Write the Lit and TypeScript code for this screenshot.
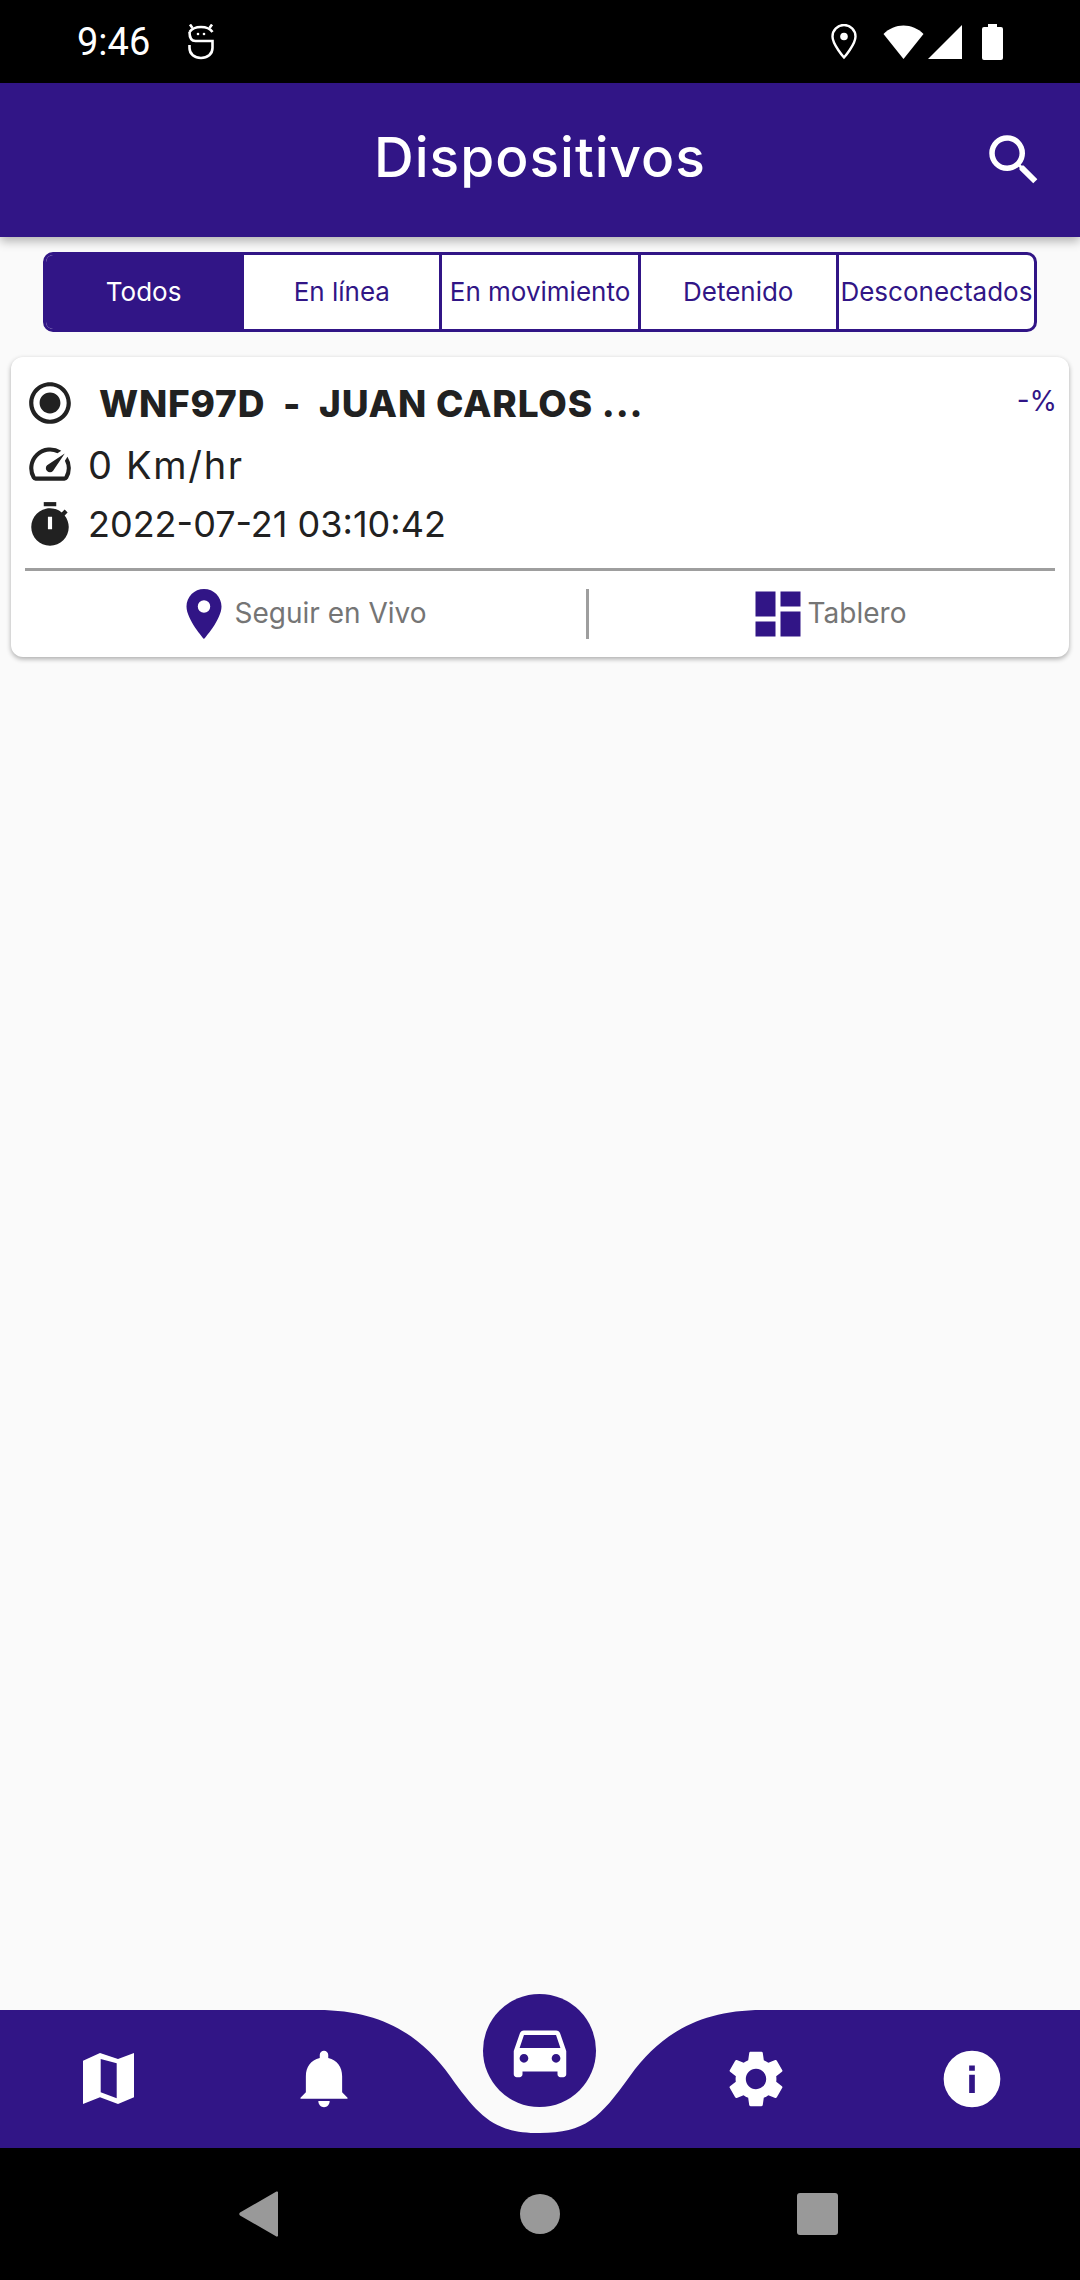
import { LitElement, html, css, svg } from "lit";
import { customElement } from "lit/decorators.js";

const tabs = ["Todos", "En línea", "En movimiento", "Detenido", "Desconectados"];

const icon = (size: number, path: unknown, cls = "") =>
  html`<svg class=${cls} width=${size} height=${size} viewBox="0 0 24 24" fill="currentColor">${path}</svg>`;

const P = {
  search: svg`<path d="M15.5 14h-.79l-.28-.27A6.47 6.47 0 0 0 16 9.5 6.5 6.5 0 1 0 9.5 16c1.61 0 3.09-.59 4.23-1.57l.27.28v.79l5 4.99L20.49 19l-4.99-5zm-6 0C7.01 14 5 11.99 5 9.5S7.01 5 9.5 5 14 7.01 14 9.5 11.99 14 9.5 14z"/>`,
  radio: svg`<path d="M12 7c-2.76 0-5 2.24-5 5s2.24 5 5 5 5-2.24 5-5-2.24-5-5-5zm0-5C6.48 2 2 6.48 2 12s4.48 10 10 10 10-4.48 10-10S17.52 2 12 2zm0 18c-4.42 0-8-3.58-8-8s3.58-8 8-8 8 3.58 8 8-3.58 8-8 8z"/>`,
  speed: svg`<path d="M20.38 8.57l-1.23 1.85a8 8 0 0 1-.22 7.58H5.07A8 8 0 0 1 15.58 6.85l1.85-1.23A10 10 0 0 0 3.35 19a2 2 0 0 0 1.72 1h13.85a2 2 0 0 0 1.74-1 10 10 0 0 0-.27-10.44z"/><path d="M10.59 15.41a2 2 0 0 0 2.83 0l5.66-8.49-8.49 5.66a2 2 0 0 0 0 2.83z"/>`,
  timer: svg`<path d="M15 1H9v2h6V1z"/><path fill-rule="evenodd" d="M19.03 7.39l1.42-1.42c-.43-.51-.9-.99-1.41-1.41l-1.42 1.42A8.962 8.962 0 0 0 12 4c-4.97 0-9 4.03-9 9s4.02 9 9 9 9-4.03 9-9c0-2.12-.74-4.07-1.97-5.61zM13 14h-2V8h2v6z"/>`,
  pin: svg`<path d="M12 2C8.13 2 5 5.13 5 9c0 5.25 7 13 7 13s7-7.75 7-13c0-3.87-3.13-7-7-7zm0 9.5a2.5 2.5 0 0 1 0-5 2.5 2.5 0 0 1 0 5z"/>`,
  dash: svg`<path d="M3 13h8V3H3v10zm0 8h8v-6H3v6zm10 0h8V11h-8v10zm0-18v6h8V3h-8z"/>`,
  car: svg`<path d="M18.92 6.01C18.72 5.42 18.16 5 17.5 5h-11c-.66 0-1.21.42-1.42 1.01L3 12v8c0 .55.45 1 1 1h1c.55 0 1-.45 1-1v-1h12v1c0 .55.45 1 1 1h1c.55 0 1-.45 1-1v-8l-2.08-5.99zM6.5 16c-.83 0-1.5-.67-1.5-1.5S5.67 13 6.5 13s1.5.67 1.5 1.5S7.33 16 6.5 16zm11 0c-.83 0-1.5-.67-1.5-1.5s.67-1.5 1.5-1.5 1.5.67 1.5 1.5-.67 1.5-1.5 1.5zM5 11l1.5-4.5h11L19 11H5z"/>`,
  bell: svg`<path d="M12 22c1.100 0 2-.9 2-2.200h-4c0 1.300.9 2.200 2 2.200z"/><path d="M20.300 19v-.4l-1.900-1.900V11c0-3.200-1.700-5.600-4.900-6.400V3.500c0-.83-.67-1.500-1.500-1.500s-1.500.67-1.500 1.500v1.100C7.300 5.400 5.600 7.800 5.600 11v5.700l-1.900 1.900v.4h16.600z"/>`,
  gear: svg`<path d="M19.14 12.94c.04-.3.06-.61.06-.94 0-.32-.02-.64-.07-.94l2.03-1.58a.49.49 0 0 0 .12-.61l-1.92-3.32a.488.488 0 0 0-.59-.22l-2.39.96c-.5-.38-1.03-.7-1.62-.94l-.36-2.54a.484.484 0 0 0-.48-.41h-3.84c-.24 0-.43.17-.47.41l-.36 2.54c-.59.24-1.13.57-1.62.94l-2.39-.96c-.22-.08-.47 0-.59.22L2.74 8.87c-.12.21-.08.47.12.61l2.03 1.58c-.05.3-.09.63-.09.94s.02.64.07.94l-2.03 1.58a.49.49 0 0 0-.12.61l1.92 3.32c.12.22.37.29.59.22l2.39-.96c.5.38 1.03.7 1.62.94l.36 2.54c.05.24.24.41.48.41h3.84c.24 0 .44-.17.47-.41l.36-2.54c.59-.24 1.13-.56 1.62-.94l2.39.96c.22.08.47 0 .59-.22l1.92-3.32c.12-.22.07-.47-.12-.61l-2.01-1.58zM12 15.6c-1.98 0-3.6-1.62-3.6-3.6s1.62-3.6 3.6-3.6 3.6 1.62 3.6 3.6-1.62 3.6-3.6 3.6z"/>`,
  info: svg`<path fill-rule="evenodd" d="M12 2a10 10 0 1 0 0 20 10 10 0 0 0 0-20zM11 7.200h2v1.900h-2zM11 10.500h2v6.400h-2z"/>`,
};

@customElement("app-root")
export class AppRoot extends LitElement {
  static styles = css`
    :host {
      display: flex;
      flex-direction: column;
      width: 1080px;
      height: 2280px;
      overflow: hidden;
      background: #fafafa;
      font-family: Inter, "Liberation Sans", sans-serif;
      --brand: #311586;
    }
    .status {
      height: 83px;
      background: #000;
      color: #fff;
      display: flex;
      align-items: center;
      padding: 0 0 0 77px;
      flex: none;
    }
    .time {
      font: 400 38px Roboto, sans-serif;
      width: 111px;
    }
    .status-right {
      margin-left: auto;
      display: flex;
      align-items: center;
      margin-right: 77px;
    }
    .status svg { display: block; }
    .wifi { margin-left: 25px; }
    .signal { margin-left: 4px; }
    .battery { margin-left: 20px; }
    .appbar {
      flex: none;
      height: 154px;
      box-sizing: border-box;
      padding-bottom: 6px;
      background: var(--brand);
      color: #fff;
      display: flex;
      align-items: center;
      justify-content: center;
      position: relative;
      box-shadow: 0 4px 10px rgba(0, 0, 0, 0.3);
      z-index: 1;
    }
    .title {
      font-size: 55px;
      font-weight: 500;
      letter-spacing: 1px;
    }
    .search {
      position: absolute;
      right: 33px;
      top: 44px;
    }
    .tabs {
      flex: none;
      display: flex;
      margin: 15px 43px 0 43px;
      height: 80px;
      border: 3px solid var(--brand);
      border-radius: 10px;
      box-sizing: border-box;
      overflow: hidden;
      background: #fff;
    }
    .tab {
      flex: 1 1 0;
      min-width: 0;
      display: flex;
      align-items: center;
      justify-content: center;
      font-size: 26px;
      padding-bottom: 2px;
      white-space: nowrap;
      color: var(--brand);
      border-left: 3px solid var(--brand);
    }
    .tab:first-child { border-left: none; }
    .tab.active { background: var(--brand); color: #fff; }
    .card {
      flex: none;
      margin: 25px 11px 0;
      height: 300px;
      box-sizing: border-box;
      background: #fff;
      border-radius: 12px;
      box-shadow: 0 2px 5px rgba(0, 0, 0, 0.32);
      padding: 14px 14px 0;
      display: flex;
      flex-direction: column;
      color: #212121;
    }
    .row { display: flex; align-items: center; }
    .row svg { flex: none; }
    .r1 { height: 64px; }
    .plate {
      font-weight: 800;
      font-size: 37px;
      margin-left: 24px;
      white-space: pre;
      letter-spacing: 0.8px;
    }
    .pct {
      margin-left: auto;
      color: var(--brand);
      font-size: 28px;
      margin-top: -4px;
      margin-right: -2px;
    }
    .r2, .r3 { height: 59px; }
    .r2 svg { margin-top: -2px; }
    .r3 svg { margin-top: 2px; }
    .val { margin-left: 13px; white-space: nowrap; font-size: 36px; }
    .speed { font-size: 38px; letter-spacing: 1.700px; }
    .divider { height: 3px; background: #9e9e9e; margin: 15px 0 0 0; flex: none; }
    .actions { flex: 1; display: flex; align-items: center; }
    .action {
      display: flex;
      align-items: center;
      justify-content: center;
      color: #757575;
      font-size: 28px;
      height: 50px;
      box-sizing: border-box;
    }
    .action span { padding-bottom: 2px; }
    .action.live { flex: 0 0 561px; padding-right: 10px; }
    .action.board { flex: 1 1 0; padding-left: 10px; }
    .action svg { color: var(--brand); flex: none; }
    .vline { width: 3px; height: 50px; background: #9e9e9e; flex: none; }
    .grow { flex: 1; }
    .bottom {
      flex: none;
      height: 138px;
      position: relative;
      display: grid;
      grid-template-columns: repeat(5, 1fr);
      align-items: center;
      justify-items: center;
      color: #fff;
    }
    .bottom .shape { position: absolute; inset: 0; width: 1080px; height: 138px; }
    .bottom .slot { position: relative; display: flex; }
    .bottom svg { display: block; }
    .fab {
      position: absolute;
      left: 483px;
      top: -16px;
      width: 113px;
      height: 113px;
      border-radius: 50%;
      background: var(--brand);
      display: flex;
      align-items: center;
      justify-content: center;
    }
    .nav {
      flex: none;
      height: 132px;
      background: #000;
      display: grid;
      grid-template-columns: repeat(3, 279px);
      justify-content: center;
      align-items: center;
      justify-items: center;
      color: #999;
    }
    .nav-back { margin-left: -5px; }
    .nav-square { margin-left: -3px; }
  `;

  render() {
    return html`
      <div class="status">
        <span class="time">9:46</span>
        <svg width="26" height="36" viewBox="0 0 26 36" fill="none" stroke="#fff" stroke-width="2.600">
          <path d="M2 0.500l2.500 3.500M24 0.500l-2.500 3.500" />
          <path d="M1.500 8C4 4.500 8 3 13 3s9 1.500 11.500 5" />
          <path d="M1.500 8c0 6 2 9 6 9H24.500v7c0 6-5 10-11.500 10S1.500 30 1.500 24v-3" />
          <circle cx="10" cy="10" r="1.300" fill="#fff" stroke="none" />
          <circle cx="16" cy="10" r="1.300" fill="#fff" stroke="none" />
        </svg>
        <div class="status-right">
          <svg width="28" height="36" viewBox="0 0 28 36" fill="none" stroke="#fff" stroke-width="2.400">
            <path d="M14 33.500S2.500 20.500 2.500 12.500a11.500 11.500 0 0 1 23 0C25.500 20.500 14 33.500 14 33.500z" />
            <circle cx="14" cy="12.500" r="3.800" fill="#fff" stroke="none" />
          </svg>
          <svg class="wifi" width="41" height="34" viewBox="0 0 41 34" fill="#fff">
            <path d="M0.500 9C6 3.500 13 0.500 20.500 0.500S35 3.500 40.500 9L20.500 34z" />
          </svg>
          <svg class="signal" width="34" height="34" viewBox="0 0 34 34" fill="#fff">
            <path d="M34 0V34H0z" />
          </svg>
          <svg class="battery" width="21" height="36" viewBox="0 0 21 36" fill="#fff">
            <path d="M6 0h9v3h4a2 2 0 0 1 2 2v29a2 2 0 0 1-2 2H2a2 2 0 0 1-2-2V5a2 2 0 0 1 2-2h4z" />
          </svg>
        </div>
      </div>
      <div class="appbar">
        <span class="title">Dispositivos</span>
        ${icon(66, P.search, "search")}
      </div>
      <div class="tabs">
        ${tabs.map((t, i) => html`<div class="tab ${i === 0 ? "active" : ""}">${t}</div>`)}
      </div>
      <div class="card">
        <div class="row r1">
          ${icon(50, P.radio)}
          <span class="plate">WNF97D  -  JUAN CARLOS ...</span>
          <span class="pct">-%</span>
        </div>
        <div class="row r2">${icon(50, P.speed)}<span class="val speed">0 Km/hr</span></div>
        <div class="row r3">${icon(50, P.timer)}<span class="val">2022-07-21 03:10:42</span></div>
        <div class="divider"></div>
        <div class="actions">
          <div class="action live">${icon(60, P.pin)}<span>Seguir en Vivo</span></div>
          <div class="vline"></div>
          <div class="action board">${icon(60, P.dash)}<span>Tablero</span></div>
        </div>
      </div>
      <div class="grow"></div>
      <div class="bottom">
        <svg class="shape" viewBox="0 0 1080 138">
          <path
            fill="#311586"
            d="M0 0H318C380 0 420 24 450 66C480 108 495 123 540 123C585 123 600 108 630 66C660 24 700 0 762 0H1080V138H0Z"
          />
        </svg>
        <div class="slot">
          <svg width="51" height="52" viewBox="0 0 51 52" fill="currentColor">
            <path
              fill-rule="evenodd"
              d="M0 7.700 17 0 35 6 51 0V44.300L35 51 17 44.300 0 51ZM17.700 6V39.300L33.700 45.300V10.300Z"
            />
          </svg>
        </div>
        <div class="slot">${icon(68, P.bell)}</div>
        <div></div>
        <div class="slot">${icon(68, P.gear)}</div>
        <div class="slot">${icon(68, P.info)}</div>
        <div class="fab">${icon(70, P.car)}</div>
      </div>
      <div class="nav">
        <svg class="nav-back" width="40" height="46" viewBox="0 0 40 46" fill="currentColor">
          <path d="M39 1.500V44.500c0 1-1 1.500-2 .8L1 24.500c-1-.7-1-2.300 0-3L37 .8c1-.7 2-.3 2 .7z" />
        </svg>
        <svg width="40" height="40" viewBox="0 0 40 40" fill="currentColor"><circle cx="20" cy="20" r="20" /></svg>
        <svg class="nav-square" width="41" height="42" viewBox="0 0 41 42" fill="currentColor"><rect width="41" height="42" rx="3" /></svg>
      </div>
    `;
  }
}
